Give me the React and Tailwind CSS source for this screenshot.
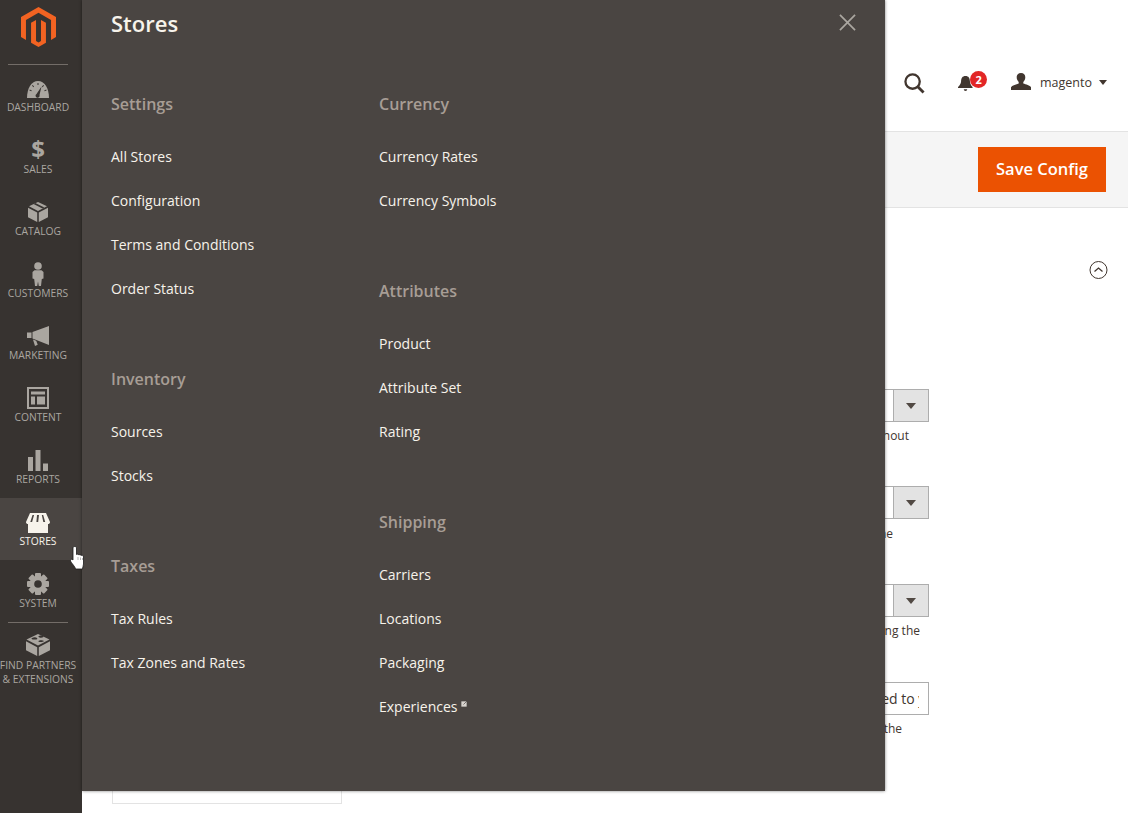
import React from "react";

const sidebarItems = [
  { label: "Dashboard", icon: DashboardIcon },
  { label: "Sales", icon: SalesIcon },
  { label: "Catalog", icon: CatalogIcon },
  { label: "Customers", icon: CustomersIcon },
  { label: "Marketing", icon: MarketingIcon },
  { label: "Content", icon: ContentIcon },
  { label: "Reports", icon: ReportsIcon },
  { label: "Stores", icon: StoresIcon, active: true },
  { label: "System", icon: SystemIcon },
];

const leftColumn = [
  { title: "Settings", links: ["All Stores", "Configuration", "Terms and Conditions", "Order Status"] },
  { title: "Inventory", links: ["Sources", "Stocks"] },
  { title: "Taxes", links: ["Tax Rules", "Tax Zones and Rates"] },
];

const rightColumn = [
  { title: "Currency", links: ["Currency Rates", "Currency Symbols"] },
  { title: "Attributes", links: ["Product", "Attribute Set", "Rating"] },
  { title: "Shipping", links: ["Carriers", "Locations", "Packaging", "Experiences"] },
];

function DashboardIcon() {
  return (
    <svg width="22" height="17" viewBox="0 0 22 17" className="fill-current">
      <path d="M0 17C0 7 4.500 0 11 0s11 7 11 17z" />
      <path d="M10.500 2h1v2h-1zM5 4.500l.8-.6 1.300 1.800-.8.600zM16.200 3.900l.8.600-1.300 1.800-.8-.600zM2.400 9.500l.4-.9 2 .8-.4.900zM19.200 8.600l.4.900-2 .8-.4-.900z" fill="#373330" />
      <path d="M14.500 5.500l-2 8.500a2 2 0 1 1-3-1z" fill="#373330" />
    </svg>
  );
}

function SalesIcon() {
  return <span className="text-[24px] leading-[20px] font-bold -mt-[4px]">$</span>;
}

function CatalogIcon() {
  return (
    <svg width="20" height="20" viewBox="0 0 20 20" className="fill-current -mt-[2px]">
      <path d="M10 0l9 4.300-9 4.700-9-4.700z" />
      <path d="M5.500 2l9 4.500 1.800-1-9-4.500z" fill="#373330" />
      <path d="M0 5.800l9.200 4.800V20L0 15.200zM10.800 10.600L20 5.800v9.400L10.800 20z" />
    </svg>
  );
}

function CustomersIcon() {
  return (
    <svg width="12" height="24" viewBox="0 0 12 24" className="fill-current -mt-[2px]">
      <circle cx="6" cy="4" r="3.800" />
      <path d="M2.500 8.200h7L11.500 10v6.500L9.800 17 9 24H6.800L6 19.500 5.200 24H3l-.8-7-1.700-.5V10z" />
    </svg>
  );
}

function MarketingIcon() {
  return (
    <svg width="22" height="21" viewBox="0 0 22 21" className="fill-current -mt-[2px]">
      <path d="M0 6.500h4.500v5.500H0zM5.500 6L22 0v19l-16.500-6.500z" />
      <path d="M6 13.500l3.200 1.300 1.500 4-2.700 1.200z" />
    </svg>
  );
}

function ContentIcon() {
  return (
    <svg width="22" height="22" viewBox="0 0 22 22" className="fill-current -mt-[2px]">
      <path fillRule="evenodd" d="M0 0h22v22H0zM2 2v18h18V2z" />
      <path d="M4 4.500h14v3H4zM4 9.500h4v8H4zM10 9.500h8v8h-8z" />
    </svg>
  );
}

function ReportsIcon() {
  return (
    <svg width="20" height="21" viewBox="0 0 20 21" className="fill-current -mt-[2px]">
      <path d="M0 7h5v14H0zM7.500 0h5v21h-5zM15 13.500h5V21h-5z" />
    </svg>
  );
}

function StoresIcon() {
  return (
    <svg width="24" height="20" viewBox="0 0 24 20" className="fill-current -mt-[1px]">
      <path d="M4 0h16l4 9c0 1.500-1 2-2 2v9H2v-9c-1 0-2-.5-2-2z" />
      <path d="M6.500 2L4.300 9h1.800l2-7zM11 2l-.6 7h1.800L13 2zM15.800 2l1.500 7h1.900l-2-7z" fill="#4a4542" />
    </svg>
  );
}

function SystemIcon() {
  const teeth = [0, 45, 90, 135];
  return (
    <svg width="22" height="22" viewBox="0 0 22 22" className="fill-current -mt-[2px]">
      {teeth.map((angle) => (
        <rect key={angle} x="8" y="0" width="6" height="22" rx="1" transform={`rotate(${angle} 11 11)`} />
      ))}
      <circle cx="11" cy="11" r="8" />
      <circle cx="11" cy="11" r="3.800" fill="#373330" />
    </svg>
  );
}

function PartnersIcon() {
  return (
    <svg width="24" height="22" viewBox="0 0 24 22" className="fill-current">
      <path d="M12 0l11.500 5.500L12 11.500.5 5.500z" />
      <path d="M0 7.300l11.200 5.900V22L0 16.300zM12.800 13.200L24 7.300v9L12.800 22z" />
      <g fill="#373330">
        <path d="M6 3.900c1.800-.9 4-.9 5 0s-.3 1.600-2 1.700-4.500-.8-3-1.700zM13 1.900c1.800-.6 3.900-.4 4.500.4s-1 1.500-2.700 1.400-3.300-1.200-1.800-1.800zM13 6.700c1.800-.8 4-.6 5 .2-.9.900-2.700 1.300-4.200 1-1.400-.2-1.900-.8-.8-1.200z" />
      </g>
    </svg>
  );
}

function MagentoLogo() {
  return (
    <svg width="35" height="40" viewBox="0 0 24 27" preserveAspectRatio="none" fill="#f26322">
      <path d="M12 0L0 6.800v13.500l3.400 1.900V8.800L12 3.900l8.600 4.900v13.400l3.400-1.900V6.800z" />
      <path d="M12 27l-5.100-2.900V10.600l3.400-1.900v14.200l1.700 1 1.700-1V8.700l3.400 1.900v13.500z" />
    </svg>
  );
}

function HandCursor() {
  return (
    <svg width="16" height="24" viewBox="0 0 16 24" className="absolute left-[70px] top-[546px] z-30">
      <path
        d="M3 2C3 1 3.700.5 4.700.5S6.500 1 6.500 2V8.500c1-.6 2-.3 2.300.4.900-.5 1.900-.2 2.200.5 1-.4 2.500 0 2.500 1.600V18c0 2-1 3-1 5H5.500c-.3-2-1.500-3-3-5C1.300 16.500.2 15 .5 14c.3-1 1.500-1 2.500 0z"
        fill="#ffffff"
        stroke="#1a1a1a"
        strokeWidth="0.800"
      />
      <path d="M8 11v3M10.500 11.500V14M12.500 12v2" stroke="#9a9a9a" strokeWidth="0.700" fill="none" />
    </svg>
  );
}

function SidebarItem({ item }) {
  const Icon = item.icon;
  return (
    <div className={`h-[62px] pt-[14px] pr-[6px] flex flex-col items-center ${item.active ? "bg-[#4a4542] text-[#f7f3eb]" : "text-[#aaa6a0]"}`}>
      <div className="h-[22px] flex items-center justify-center">
        <Icon />
      </div>
      <span className="text-[10.3px] leading-[14px] uppercase">{item.label}</span>
    </div>
  );
}

function MenuSection({ section }) {
  return (
    <div className="mb-[47px]">
      <h3 className="h-[44px] mb-[8px] flex items-center text-[16px] font-semibold text-[#a79d95]">{section.title}</h3>
      {section.links.map((link) => (
        <div key={link} className="h-[44px] flex items-center text-[14px] text-[#f7f3eb]">
          {link}
          {link === "Experiences" && (
            <svg width="7" height="7" viewBox="0 0 7 7" className="ml-[4px] mb-[5px]" fill="#d8d4cf" stroke="#4a4542" strokeWidth="0.700">
              <path d="M0 1h6v6H0z" />
              <path d="M2.500 4.500L6.500.5M4 .5h2.500V3" fill="none" />
            </svg>
          )}
        </div>
      ))}
    </div>
  );
}

function FormSelect() {
  return (
    <div className="ml-auto w-[129px] h-[33px] flex border border-[#adadad] bg-white">
      <div className="flex-1" />
      <div className="w-[35px] flex items-center justify-center bg-[#e3e3e3] border-l border-[#adadad]">
        <div className="w-0 h-0 border-x-[5px] border-x-transparent border-t-[6px] border-t-[#514943]" />
      </div>
    </div>
  );
}

export default function App() {
  return (
    <div className="relative w-[1128px] h-[813px] overflow-hidden flex bg-white font-['Open_Sans',sans-serif] text-[#41362f]">
      <aside className="w-[82px] shrink-0 bg-[#373330]">
        <div className="h-[64px] pt-[7px] pr-[5px] flex justify-center">
          <MagentoLogo />
        </div>
        <div className="ml-[8px] w-[60px] h-px bg-[#736d68]" />
        <div className="-mt-px">
          {sidebarItems.map((item) => (
            <SidebarItem key={item.label} item={item} />
          ))}
        </div>
        <div className="ml-[8px] w-[60px] h-px bg-[#736d68]" />
        <div className="pt-[11px] pr-[6px] flex flex-col items-center text-[#aaa6a0]">
          <div className="h-[22px] flex items-center justify-center">
            <PartnersIcon />
          </div>
          <span className="mt-[2px] text-[10.3px] leading-[14px] uppercase text-center whitespace-nowrap">
            Find Partners
            <br />& Extensions
          </span>
        </div>
      </aside>

      <main className="flex-1 min-w-0 flex flex-col">
        <header className="h-[131px] pt-[33px] pr-[21px] flex items-center justify-end shrink-0">
          <svg width="21" height="21" viewBox="0 0 22 22" fill="none" stroke="#41362f" strokeWidth="2.400" className="mt-[2px]">
            <circle cx="9" cy="9" r="7.500" />
            <path d="M14.500 14.500l6 6" strokeWidth="3" />
          </svg>
          <div className="relative ml-[33px] w-[15px] h-[17px] mt-[3px]">
            <svg width="15" height="17" viewBox="0 0 17 19" fill="#41362f">
              <path d="M8.500 1c3.500 0 5 2.500 5 6 0 3 1.500 5 3 6.500v1H0v-1C1.500 12 3.500 10 3.500 7c0-3.500 1.500-6 5-6zM6.500 16h4a2 2 0 0 1-4 0z" />
            </svg>
            <span className="absolute left-[12px] -top-[4px] w-[17px] h-[17px] rounded-full bg-[#e22626] text-white text-[11px] leading-[17px] font-bold text-center">2</span>
          </div>
          <svg width="20" height="17" viewBox="0 0 20 19" preserveAspectRatio="none" fill="#41362f" className="ml-[38px] -mt-[1px]">
            <path d="M10 0c2.800 0 4.300 2 4.300 4.800 0 2.300-1 4.200-2 5.200v1.800c2.500 1 6.700 2 7.700 4.200V19H0v-3c1-2.200 5.200-3.200 7.700-4.200V10c-1-1-2-2.900-2-5.200C5.700 2 7.200 0 10 0z" />
          </svg>
          <span className="ml-[9px] mt-[2px] text-[12.5px]">magento</span>
          <div className="ml-[7px] w-0 h-0 border-x-[4px] border-x-transparent border-t-[5px] border-t-[#41362f]" />
        </header>

        <div className="h-[77px] shrink-0 bg-[#f5f5f5] border-y border-[#e3e3e3] pt-[15px] pr-[22px] flex justify-end">
          <button className="w-[128px] h-[45px] bg-[#eb5202] text-white text-[16.5px] font-semibold">Save Config</button>
        </div>

        <div className="pt-[53px] pr-[20px] flex justify-end">
          <svg width="19" height="18" viewBox="0 0 19 18" fill="none" stroke="#41362f" strokeWidth="1">
            <circle cx="9.500" cy="9" r="8.500" />
            <path d="M5.500 10.500l4-3.500 4 3.500" strokeWidth="1.300" />
          </svg>
        </div>

        <div className="mt-[110px] w-[847px] text-[12px] leading-[16px]">
          <div className="h-[97px]">
            <FormSelect />
            <p className="mt-[6px] pr-[20px] text-right">without</p>
          </div>
          <div className="h-[98px]">
            <FormSelect />
            <p className="mt-[7px] pr-[36px] text-right">the</p>
          </div>
          <div className="h-[98px]">
            <FormSelect />
            <p className="mt-[6px] pr-[9px] text-right">using the</p>
          </div>
          <div className="h-[98px]">
            <div className="ml-auto w-[129px] h-[33px] pl-[65px] border border-[#adadad] bg-white text-[14px] leading-[31px]">
              <div className="w-[53px] overflow-hidden whitespace-nowrap">used to your</div>
            </div>
            <p className="mt-[6px] pr-[27px] text-right">the</p>
          </div>
        </div>

        <div className="ml-[30px] w-[230px] h-[24px] border border-[#e3e3e3]" />
      </main>

      <div className="absolute left-[82px] top-0 z-20 w-[803px] h-[791px] bg-[#4a4542] shadow-[0_0_3px_rgba(0,0,0,0.5)] pl-[29px] pr-[29px]">
        <div className="h-[46px] flex items-center justify-between">
          <h2 className="text-[22px] font-semibold text-[#f7f3eb]">Stores</h2>
          <svg width="17" height="17" viewBox="0 0 18 18" stroke="#aaa6a0" strokeWidth="1.800" className="-mt-[1px]">
            <path d="M1 1l16 16M17 1L1 17" />
          </svg>
        </div>
        <div className="mt-[36px] flex">
          <div className="w-[268px]">
            {leftColumn.map((section) => (
              <MenuSection key={section.title} section={section} />
            ))}
          </div>
          <div>
            {rightColumn.map((section) => (
              <MenuSection key={section.title} section={section} />
            ))}
          </div>
        </div>
      </div>

      <HandCursor />
    </div>
  );
}
